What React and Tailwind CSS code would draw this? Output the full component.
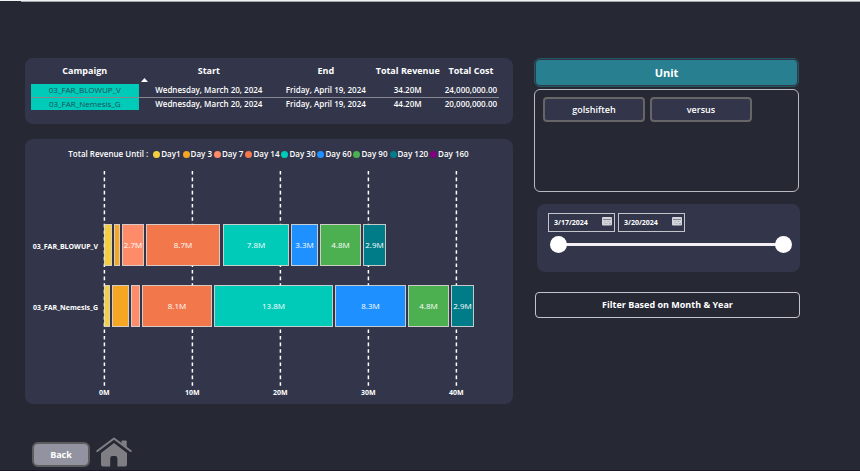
import React, { useState } from "react";

const campaigns = [
  ["03_FAR_BLOWUP_V", "Wednesday, March 20, 2024", "Friday, April 19, 2024", "34.20M", "24,000,000.00"],
  ["03_FAR_Nemesis_G", "Wednesday, March 20, 2024", "Friday, April 19, 2024", "44.20M", "20,000,000.00"],
];

const legend = [
  ["Day1", "bg-[#f4d03f]"],
  ["Day 3", "bg-[#f5a623]"],
  ["Day 7", "bg-[#ff8c69]"],
  ["Day 14", "bg-[#f2784b]"],
  ["Day 30", "bg-[#00cbb8]"],
  ["Day 60", "bg-[#1e90ff]"],
  ["Day 90", "bg-[#4caf50]"],
  ["Day 120", "bg-[#007c89]"],
  ["Day 160", "bg-[#800080]"],
];

const fills = ["#f4d03f", "#f5a623", "#ff8c69", "#f2784b", "#00cbb8", "#1e90ff", "#4caf50", "#007c89"];

// Each segment is [start, width, label] in chart units.
const series = [
  {
    name: "03_FAR_BLOWUP_V",
    y: 56,
    segments: [
      [79, 8, ""], [89, 6, ""], [97, 22, "2.7M"], [121, 74, "8.7M"],
      [198, 66, "7.8M"], [266, 27, "3.3M"], [295, 41, "4.8M"], [338, 23, "2.9M"],
    ],
  },
  {
    name: "03_FAR_Nemesis_G",
    y: 117,
    segments: [
      [79, 6, ""], [87, 17, ""], [106, 9, ""], [117, 70, "8.1M"],
      [189, 119, "13.8M"], [310, 71, "8.3M"], [383, 41, "4.8M"], [426, 23, "2.9M"],
    ],
  },
];

const ticks = [[79, "0M"], [167, "10M"], [255, "20M"], [343, "30M"], [431, "40M"]];

function CampaignTable() {
  return (
    <section className="h-[66px] rounded-lg bg-[#33364a] pl-[6px] pr-[14px] pt-1">
      <table className="w-full table-fixed border-collapse text-center">
        <colgroup>
          <col className="w-[23%]" />
          <col className="w-[30%]" />
          <col className="w-[20%]" />
          <col className="w-[15%]" />
          <col className="w-[12%]" />
        </colgroup>
        <thead>
          <tr className="h-[22px] text-[9px] leading-[18px] whitespace-nowrap">
            <th className="relative p-0 align-top font-bold">
              Campaign
              <svg viewBox="0 0 7 4" className="absolute -right-[9px] bottom-[2px] h-1 w-[7px]" aria-hidden="true">
                <path d="M3.5 0 7 4H0z" fill="#fff" />
              </svg>
            </th>
            <th className="p-0 align-top font-bold">Start</th>
            <th className="p-0 align-top font-bold">End</th>
            <th className="p-0 align-top font-bold">Total Revenue</th>
            <th className="p-0 align-top font-bold">Total Cost</th>
          </tr>
        </thead>
        <tbody className="text-[8px] leading-[12px] font-semibold whitespace-nowrap">
          {campaigns.map((row, i) => (
            <tr key={row[0]} className={i === 0 ? "border-b border-[#858791]" : ""}>
              {row.map((cell, j) => (
                <td
                  key={j}
                  className={j === 0 ? "h-[13px] bg-[#00cbb8] p-0 font-normal text-[#1d4f58]" : "h-[13px] p-0"}
                >
                  {cell}
                </td>
              ))}
            </tr>
          ))}
        </tbody>
      </table>
    </section>
  );
}

function RevenueChart() {
  return (
    <section className="rounded-lg bg-[#33364a] pt-[9px] pb-1">
      <div className="flex items-center justify-center gap-[2px] pr-[1px] text-[8px] leading-[12px] font-semibold whitespace-nowrap">
        <span className="pr-[3px]">Total Revenue Until :</span>
        {legend.map(([name, color]) => (
          <span key={name} className="flex items-center gap-[1px]">
            <span className={`size-[7px] rounded-full ${color}`} />
            {name}
          </span>
        ))}
      </div>
      <svg viewBox="0 0 488 232" className="mt-2 block w-full" role="img" aria-label="Total revenue by campaign">
        {ticks.map(([x, label]) => (
          <g key={label}>
            <line x1={x + 0.4} x2={x + 0.4} y1="3" y2="218" stroke="#fff" strokeWidth="1.5" strokeDasharray="3.6 3" />
            <text x={x + 0.4} y="227" textAnchor="middle" className="fill-white text-[7px] font-bold">{label}</text>
          </g>
        ))}
        {series.map((row) => (
          <g key={row.name}>
            <text x="73" y={row.y + 25} textAnchor="end" className="fill-white text-[7px] font-bold">{row.name}</text>
            {row.segments.map(([x, w, label], i) => (
              <g key={i}>
                <rect x={x + 0.5} y={row.y + 0.5} width={w - 1} height="41" fill={fills[i]} stroke="#e3dedb" strokeOpacity="0.85" />
                <text x={x + w / 2} y={row.y + 24} textAnchor="middle" className="fill-white text-[8px] font-medium">{label}</text>
              </g>
            ))}
          </g>
        ))}
      </svg>
    </section>
  );
}

function CalendarIcon() {
  return (
    <svg viewBox="0 0 10 9" className="h-[9px] w-[10px] shrink-0" aria-hidden="true">
      <rect width="10" height="8.5" rx="1" fill="#d4d5da" />
      <path d="M1 2.5h8" stroke="#777987" strokeWidth="0.9" />
      <path d="M2 4.5h2M5 4.5h3M2 6.5h4" stroke="#b4b6be" strokeWidth="0.8" />
      <path d="M7 6.8h2" stroke="#8c8e9a" strokeWidth="0.8" />
    </svg>
  );
}

function DateField({ label, initial }) {
  return (
    <label className="flex h-[19px] w-[67px] items-start justify-between border border-[#c4c5cb] pt-[3px] pr-[2px] pl-[5px]">
      <input
        type="text"
        aria-label={label}
        defaultValue={initial}
        className="h-3 w-[46px] bg-transparent text-[7px] leading-[12px] font-bold text-white outline-none"
      />
      <CalendarIcon />
    </label>
  );
}

const thumb =
  "pointer-events-none absolute inset-0 m-0 h-[17px] w-full appearance-none bg-transparent [&::-webkit-slider-thumb]:pointer-events-auto [&::-webkit-slider-thumb]:size-[17px] [&::-webkit-slider-thumb]:appearance-none [&::-webkit-slider-thumb]:rounded-full [&::-webkit-slider-thumb]:bg-white";

function DateRange() {
  const [from, setFrom] = useState(0);
  const [to, setTo] = useState(100);
  return (
    <section className="ml-[2px] h-[68px] rounded-lg bg-[#33364a] pt-[9px] pr-2 pl-[11px]">
      <div className="flex gap-[3px]">
        <DateField label="Start date" initial="3/17/2024" />
        <DateField label="End date" initial="3/20/2024" />
      </div>
      <div className="relative mt-1 ml-[2px] flex h-[17px] items-center px-2">
        <div className="h-[3px] w-full bg-[#f3eff5]" />
        <input type="range" aria-label="Range start" value={from} onChange={(e) => setFrom(Number(e.target.value))} className={thumb} />
        <input type="range" aria-label="Range end" value={to} onChange={(e) => setTo(Number(e.target.value))} className={thumb} />
      </div>
    </section>
  );
}

function HomeIcon() {
  return (
    <svg viewBox="0 0 36 30" className="block h-[30px] w-9" fill="#7f7f83" aria-hidden="true">
      <path d="M1.3 14 18 1.5 34.7 14" fill="none" stroke="#7f7f83" strokeWidth="2.1" strokeLinecap="round" strokeLinejoin="round" />
      <path d="M25.5 4.2q0-.8.8-.8h3.6q.8 0 .8.8v6.2l-5.2-4z" />
      <path d="M18 6 5 16v11.5q0 2 2 2h7.2V21.2q0-2.2 2.2-2.2h2.8q2.2 0 2.2 2.2v8.3H29q2 0 2-2V16z" />
    </svg>
  );
}

export default function App() {
  return (
    <main className="flex min-h-screen flex-col border-t border-b border-t-[#eef3f3] border-b-[#1b1726] bg-[#262834] font-['Open_Sans','Noto_Sans',sans-serif] text-white">
      <div className="ml-[21px] h-px bg-[#a4a7ab]" />
      <div className="mt-14 grid grid-cols-[488fr_266fr] items-start gap-[21px] pr-[60px] pl-[25px]">
        <div className="flex flex-col gap-[15px]">
          <CampaignTable />
          <RevenueChart />
        </div>
        <div className="flex flex-col">
          <div className="pr-px">
            <h1 className="rounded-md border border-[#235762] bg-[#33364a] p-px text-center text-[11px] leading-[25px] font-bold">
              <span className="block rounded-sm bg-[#287f90]">Unit</span>
            </h1>
            <div className="mt-[2px] flex h-[103px] items-start gap-[5px] rounded-md border border-[#b9bac0] pt-[7px] pl-2">
              <button className="h-[25px] w-[102px] rounded-sm border-2 border-[#666666] bg-[#33364a] text-[9px] leading-[20px] font-semibold">
                golshifteh
              </button>
              <button className="h-[25px] w-[102px] rounded-sm border-2 border-[#666666] bg-[#33364a] text-[9px] leading-[20px] font-semibold">
                versus
              </button>
            </div>
          </div>
          <div className="mt-3 flex flex-col gap-5 pl-px">
            <DateRange />
            <button className="h-[26px] rounded border border-[#c4c5cb] text-[9px] font-bold">
              Filter Based on Month &amp; Year
            </button>
          </div>
        </div>
      </div>
      <nav className="mt-[33px] flex items-end gap-[6px] pl-8">
        <button className="h-[25px] w-[58px] rounded-md border-2 border-[#5d5c5e] bg-[#9293a0] text-[9px] font-bold">
          Back
        </button>
        <a href="#home" aria-label="Home">
          <HomeIcon />
        </a>
      </nav>
    </main>
  );
}
